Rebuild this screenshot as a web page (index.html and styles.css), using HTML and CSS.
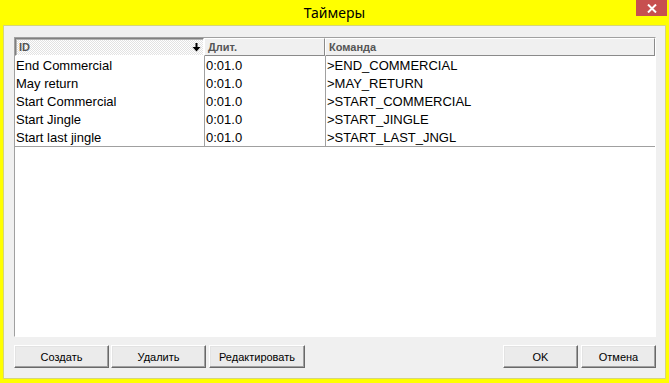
FILE: index.html
```html
<html lang="ru">

<head>
    <meta charset="UTF-8">
    <meta name="viewport" content="width=device-width, initial-scale=1.0">
    <title>Таймеры</title>
    <link rel="stylesheet" href="styles.css">
</head>

<body>
    <div class="window">
        <div class="titlebar">
            <span></span>
            <span class="title">Таймеры</span>
            <button class="close" title="Закрыть">
                <svg width="10" height="9" viewBox="0 0 10 9">
                    <path d="M1 0.5 L9 8.5 M9 0.5 L1 8.5" stroke="#fff" stroke-width="2" />
                </svg>
            </button>
        </div>
        <div class="client">
            <div class="list">
                <div class="list-head">
                    <div class="hcell sorted">
                        <span>ID</span>
                        <svg width="9" height="9" viewBox="0 0 9 9">
                            <path d="M3.5 0 H5.5 V4 H8.5 L4.5 8.5 L0.5 4 H3.5 Z" fill="#000" />
                        </svg>
                    </div>
                    <div class="hcell">Длит.</div>
                    <div class="hcell">Команда</div>
                </div>
                <div class="list-body">
                    <div class="row">
                        <div class="cell">End Commercial</div>
                        <div class="cell">0:01.0</div>
                        <div class="cell">&gt;END_COMMERCIAL</div>
                    </div>
                    <div class="row">
                        <div class="cell">May return</div>
                        <div class="cell">0:01.0</div>
                        <div class="cell">&gt;MAY_RETURN</div>
                    </div>
                    <div class="row">
                        <div class="cell">Start Commercial</div>
                        <div class="cell">0:01.0</div>
                        <div class="cell">&gt;START_COMMERCIAL</div>
                    </div>
                    <div class="row">
                        <div class="cell">Start Jingle</div>
                        <div class="cell">0:01.0</div>
                        <div class="cell">&gt;START_JINGLE</div>
                    </div>
                    <div class="row">
                        <div class="cell">Start last jingle</div>
                        <div class="cell">0:01.0</div>
                        <div class="cell">&gt;START_LAST_JNGL</div>
                    </div>
                </div>
            </div>
            <div class="buttons">
                <div class="group">
                    <button class="btn">Создать</button>
                    <button class="btn">Удалить</button>
                    <button class="btn wide">Редактировать</button>
                </div>
                <div class="group">
                    <button class="btn small">OK</button>
                    <button class="btn small">Отмена</button>
                </div>
            </div>
        </div>
    </div>
</body>

</html>
```

FILE: styles.css
```css
body {
    margin: 0;
    font-family: "Liberation Sans", Arial, sans-serif;
    background-color: #ffff00;
}

.window {
    width: 669px;
    height: 383px;
    background-color: #ffff00;
    display: flex;
    flex-direction: column;
}

.titlebar {
    height: 25px;
    display: grid;
    grid-template-columns: 1fr auto 1fr;
}

.title {
    font-family: "Noto Sans", "Open Sans", sans-serif;
    font-size: 14px;
    line-height: 25px;
    color: #000;
}

.close {
    justify-self: end;
    width: 31px;
    height: 16px;
    margin-right: 2px;
    padding: 0;
    border: none;
    background-color: #c75050;
    display: flex;
    align-items: center;
    justify-content: center;
}

.client {
    margin: 0 3px 4px 3px;
    height: 354px;
    box-sizing: border-box;
    border: 1px solid #d6d67a;
    background-color: #f0f0f0;
    padding: 11px 9px 10px 10px;
    display: flex;
    flex-direction: column;
    gap: 8px;
}

.list {
    height: 300px;
    box-sizing: border-box;
    border: 1px solid;
    border-color: #a0a0a0 #fff #fff #a0a0a0;
    background-color: #fff;
}

.list-head,
.row {
    display: grid;
    grid-template-columns: 189px 121px 1fr;
}

.hcell {
    height: 18px;
    box-sizing: border-box;
    padding-left: 3px;
    font-size: 11px;
    font-weight: bold;
    color: #555;
    line-height: 17px;
    border: 1px solid;
    border-color: #fff #8a8a8a #8a8a8a #fff;
    background-color: #f0f0f0;
}

.hcell.sorted {
    border-color: #808080 #fff #fff #808080;
    box-shadow: inset 1px 1px 0 #b4b4b4;
    background-color: #f8f8f8;
    background-image: repeating-conic-gradient(#e2e2e2 0 25%, #ffffff 0 50%);
    background-size: 2px 2px;
    display: flex;
    align-items: center;
    justify-content: space-between;
    padding-right: 2px;
}

.list-body {
    border-bottom: 1px solid #a0a0a0;
}

.cell {
    height: 18px;
    line-height: 20px;
    font-size: 13px;
    color: #000;
    padding-left: 1px;
    white-space: nowrap;
}

.cell + .cell {
    border-left: 1px solid #a0a0a0;
}

.buttons {
    display: flex;
    justify-content: space-between;
}

.group {
    display: flex;
    gap: 2px;
}

.btn {
    width: 95px;
    height: 23px;
    box-sizing: border-box;
    padding: 0;
    font-family: "Liberation Sans", Arial, sans-serif;
    font-size: 11px;
    color: #000;
    background-color: #ebebeb;
    border: 1px solid;
    border-color: #fff #696969 #696969 #fff;
    box-shadow: inset -1px -1px 0 #a0a0a0, inset 1px 1px 0 #e3e3e3;
}

.btn.wide {
    width: 96px;
    margin-left: 1px;
}

.btn.small {
    width: 75px;
    margin-left: 1px;
}
```
